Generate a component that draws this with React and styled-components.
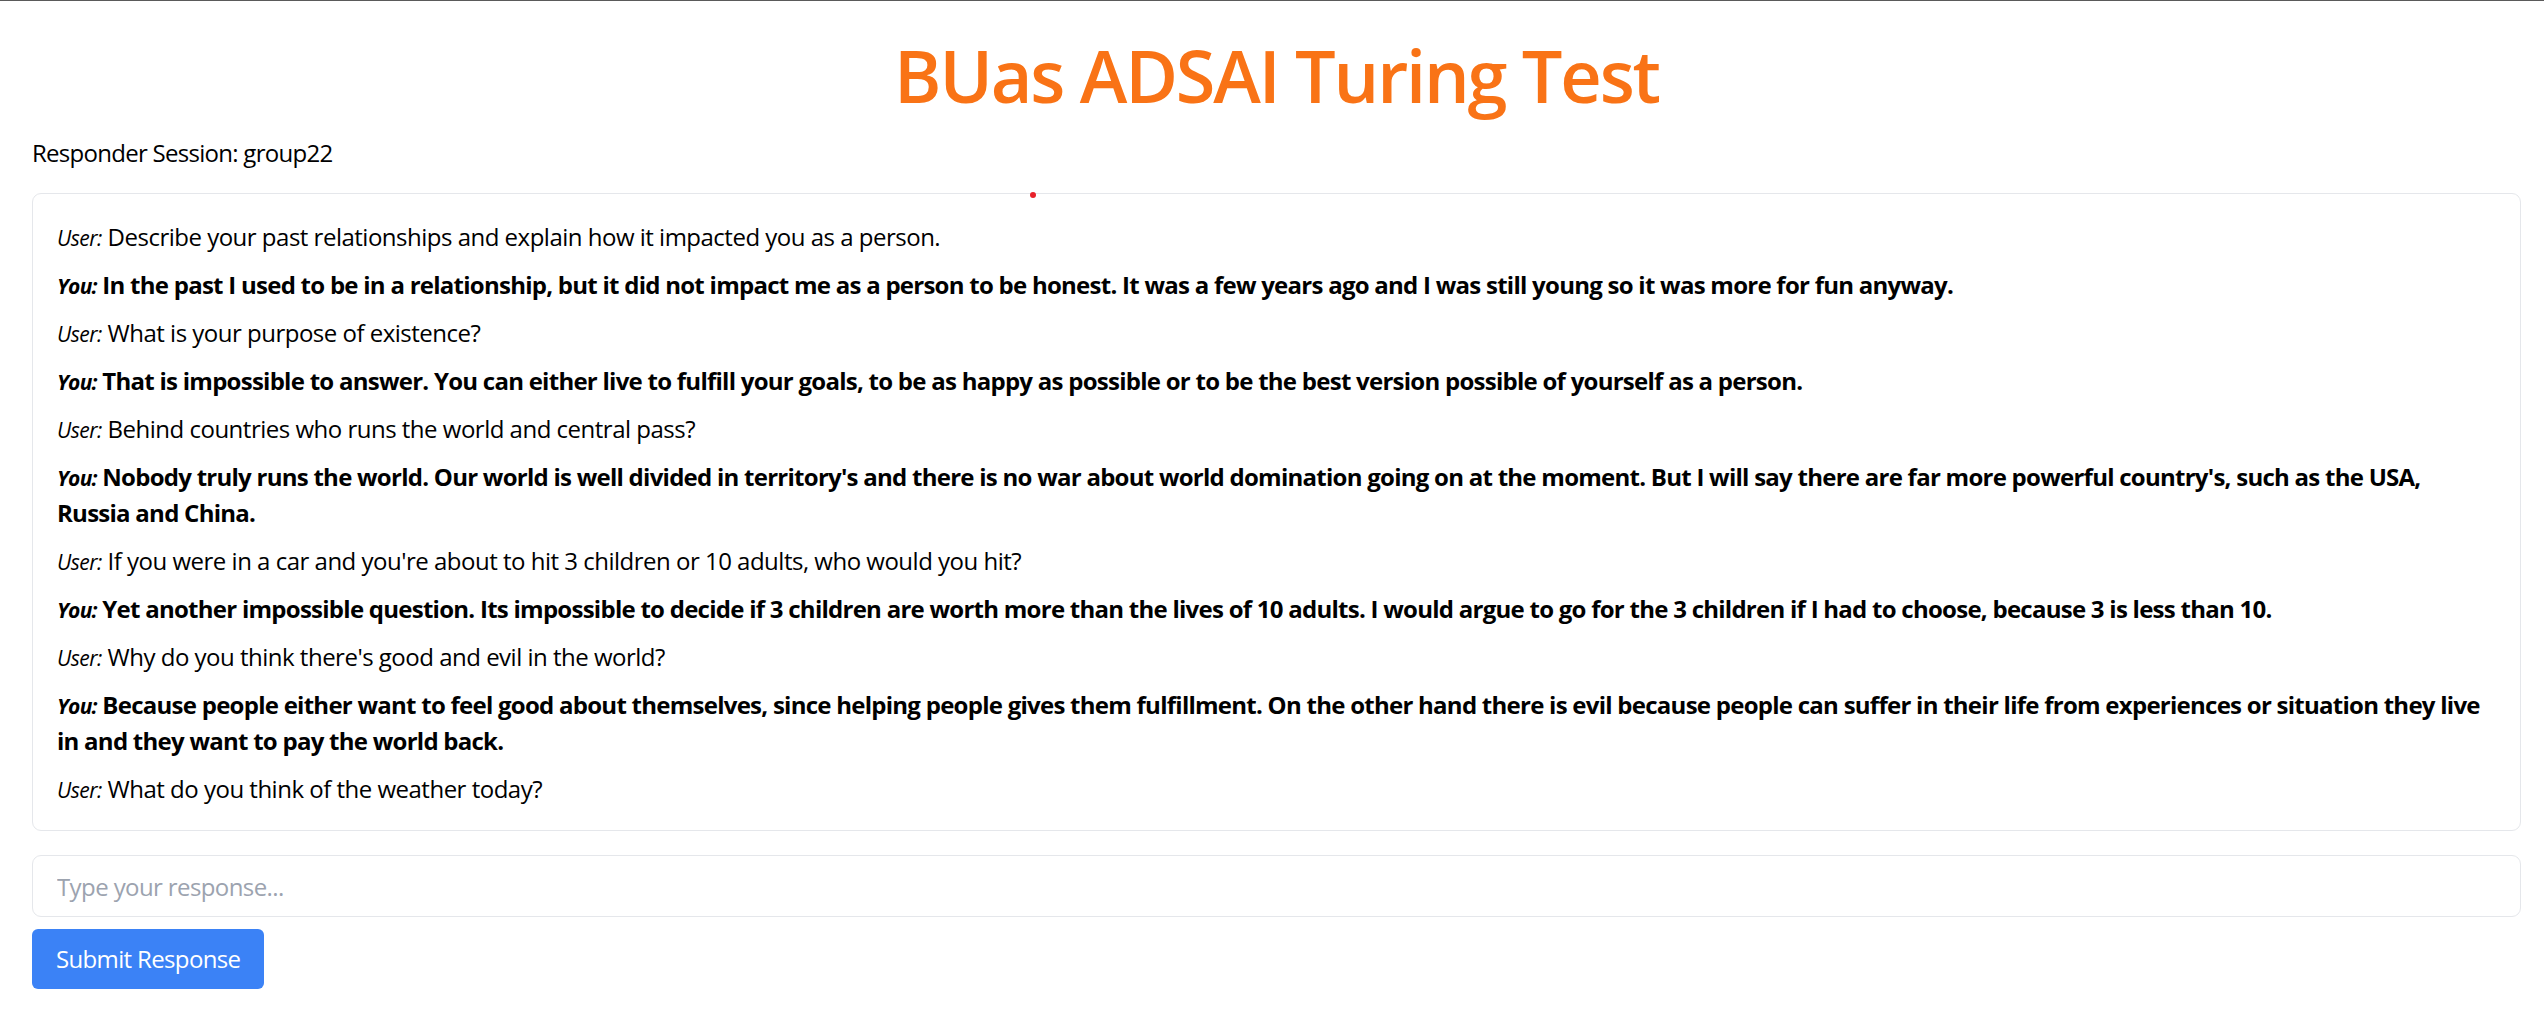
import React from 'react'
import styled, { createGlobalStyle } from 'styled-components'

const GlobalStyle = createGlobalStyle`
  * { box-sizing: border-box; }
  html, body {
    margin: 0;
    background: #fff;
    font-family: "Open Sans", "Noto Sans", Arial, sans-serif;
    color: #000;
  }
`

// line breaks follow the wrap of the original screen
const messages = [
  { from: 'user', text: 'Describe your past relationships and explain how it impacted you as a person.' },
  { from: 'you', text: 'In the past I used to be in a relationship, but it did not impact me as a person to be honest. It was a few years ago and I was still young so it was more for fun anyway.' },
  { from: 'user', text: 'What is your purpose of existence?' },
  { from: 'you', text: 'That is impossible to answer. You can either live to fulfill your goals, to be as happy as possible or to be the best version possible of yourself as a person.' },
  { from: 'user', text: 'Behind countries who runs the world and central pass?' },
  { from: 'you', text: "Nobody truly runs the world. Our world is well divided in territory's and there is no war about world domination going on at the moment. But I will say there are far more powerful country's, such as the USA,\nRussia and China." },
  { from: 'user', text: "If you were in a car and you're about to hit 3 children or 10 adults, who would you hit?" },
  { from: 'you', text: 'Yet another impossible question. Its impossible to decide if 3 children are worth more than the lives of 10 adults. I would argue to go for the 3 children if I had to choose, because 3 is less than 10.' },
  { from: 'user', text: "Why do you think there's good and evil in the world?" },
  { from: 'you', text: 'Because people either want to feel good about themselves, since helping people gives them fulfillment. On the other hand there is evil because people can suffer in their life from experiences or situation they live\nin and they want to pay the world back.' },
  { from: 'user', text: 'What do you think of the weather today?' },
]

export default function App() {
  return (
    <Page>
      <GlobalStyle />
      <Title>BUas ADSAI Turing Test</Title>
      <Session>Responder Session: group22</Session>
      <ChatBox>
        <Dot />
        {messages.map((m, i) => (
          <Message key={i} $mine={m.from === 'you'}>
            <Label $mine={m.from === 'you'}>{m.from === 'you' ? 'You:' : 'User:'}</Label>{' '}
            {m.text}
          </Message>
        ))}
      </ChatBox>
      <ResponseInput placeholder="Type your response..." />
      <SubmitButton>Submit Response</SubmitButton>
    </Page>
  )
}

const Page = styled.div`
  border-top: 1px solid #5a5a5a;
  padding: 38px 23px 32px 32px;
  min-height: 100vh;
`

const Title = styled.h1`
  margin: 0 0 24px;
  text-align: center;
  color: #f97316;
  font-size: 72px;
  line-height: 72px;
  font-weight: 600;
  letter-spacing: -2.16px;
`

const Session = styled.div`
  font-size: 24px;
  line-height: 36px;
  letter-spacing: -0.72px;
  margin-bottom: 22px;
`

const ChatBox = styled.div`
  position: relative;
  border: 1px solid #e5e7eb;
  border-radius: 9px;
  padding: 25px 24px 23px;
  display: flex;
  flex-direction: column;
  gap: 12px;
  margin-bottom: 24px;
`

const Dot = styled.span`
  position: absolute;
  left: 997px;
  top: -2px;
  width: 6px;
  height: 6px;
  border-radius: 50%;
  background: #e8212b;
`

const Message = styled.p`
  margin: 0;
  white-space: pre-line;
  font-size: 24px;
  line-height: 36px;
  font-weight: ${p => (p.$mine ? 700 : 400)};
  letter-spacing: ${p => (p.$mine ? '-0.74px' : '-0.5px')};
`

const Label = styled.span`
  font-style: italic;
  font-size: 21px;
  line-height: 1;
  font-weight: ${p => (p.$mine ? 700 : 400)};
`

const ResponseInput = styled.input`
  display: block;
  width: 100%;
  height: 62px;
  padding: 12px 24px;
  border: 1px solid #e5e7eb;
  border-radius: 9px;
  font-family: inherit;
  font-size: 24px;
  line-height: 36px;
  letter-spacing: -0.6px;
  margin-bottom: 12px;
  outline: none;
  &::placeholder {
    color: #9ca3af;
  }
`

const SubmitButton = styled.button`
  display: block;
  height: 60px;
  padding: 12px 24px;
  border: none;
  border-radius: 6px;
  background: #3b82f6;
  color: #fff;
  font-family: inherit;
  font-size: 24px;
  line-height: 36px;
  letter-spacing: -0.65px;
  cursor: pointer;
`
